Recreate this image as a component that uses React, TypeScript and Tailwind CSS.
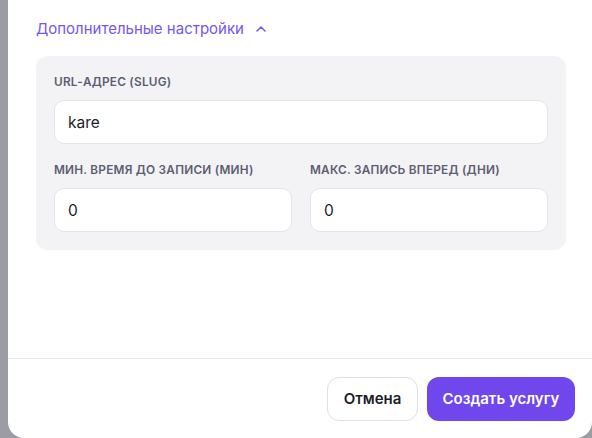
import { ChevronUp } from "lucide-react";

const font = { fontFamily: "Inter, 'Noto Sans', sans-serif" };

function Field({ label, value }: { label: string; value: string }) {
  return (
    <div className="flex min-w-0 flex-1 flex-col">
      <label className="mb-[10px] h-[16px] text-[11.8px] font-semibold uppercase leading-[16px] tracking-[0.02em] text-[#5d5d72]">
        {label}
      </label>
      <input
        readOnly
        value={value}
        className="box-border h-[44px] w-full rounded-[10px] border border-[#e3e3ea] bg-white px-[13px] text-[15.5px] text-[#1d1d2b] outline-none"
      />
    </div>
  );
}

export default function App() {
  return (
    <div className="flex h-[438px] w-[592px] overflow-hidden bg-[#9c9ca4]" style={font}>
      <div className="ml-[8px] flex h-[438px] w-[584px] flex-col rounded-b-2xl bg-white">
        <div className="flex-1 pl-[28px] pr-[26px] pt-[19px]">
          <button className="flex h-[20px] items-center gap-[9px] text-[15px] text-[#7457f0]">
            Дополнительные настройки
            <ChevronUp size={16} strokeWidth={2.25} />
          </button>

          <div className="mt-[17px] flex flex-col gap-[18px] rounded-xl bg-[#f3f3f6] p-[18px]">
            <Field label="URL-адрес (slug)" value="kare" />
            <div className="flex gap-[18px]">
              <Field label="Мин. время до записи (мин)" value="0" />
              <Field label="Макс. запись вперед (дни)" value="0" />
            </div>
          </div>
        </div>

        <div className="flex justify-end gap-[9px] border-t border-[#e4e4ec] pb-[17px] pl-4 pr-[17px] pt-[18px]">
          <button className="h-[44px] w-[91px] rounded-xl border border-[#dedee6] bg-white text-[15px] font-semibold text-[#1d1d2b]">
            Отмена
          </button>
          <button className="h-[44px] w-[148px] rounded-xl bg-[#6f47ec] text-[15px] font-semibold text-white">
            Создать услугу
          </button>
        </div>
      </div>
    </div>
  );
}
